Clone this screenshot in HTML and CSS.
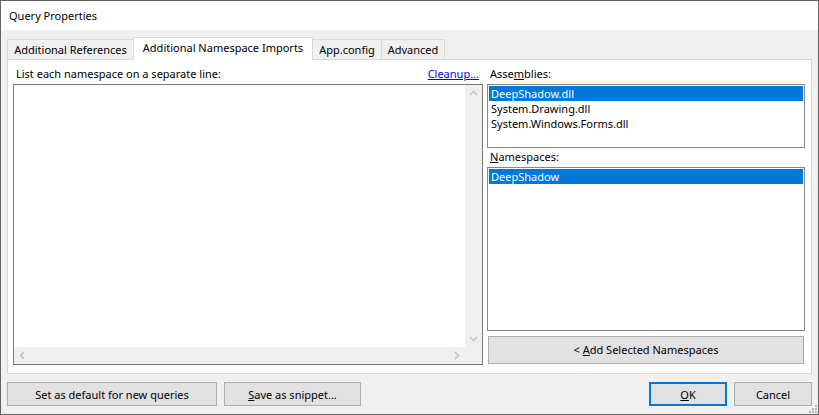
FILE: index.html
```html
<!DOCTYPE html>
<html>
<head>
<meta charset="utf-8">
<title>Query Properties</title>
<link rel="stylesheet" href="styles.css">
</head>
<body>
<div class="window">
  <div class="titlebar">Query Properties</div>
  <div class="client">
    <div class="tabs">
      <div class="tab t1">Additional References</div>
      <div class="tab active t2">Additional Namespace Imports</div>
      <div class="tab t3">App.config</div>
      <div class="tab t4">Advanced</div>
    </div>
    <div class="panel">
      <div class="left-col">
        <div class="label-row"><span>List each namespace on a separate line:</span><a class="link">Cleanup...</a></div>
        <div class="editor">
          <div class="edit-area"></div>
          <div class="vscroll">
            <span class="arrow"><svg width="17" height="17" viewBox="0 0 17 17"><polyline points="5,10 8.5,6.5 12,10" fill="none" stroke="#c2c2c2" stroke-width="1.6"/></svg></span>
            <span class="arrow"><svg width="17" height="17" viewBox="0 0 17 17"><polyline points="5,7 8.5,10.5 12,7" fill="none" stroke="#c2c2c2" stroke-width="1.6"/></svg></span>
          </div>
          <div class="hscroll">
            <span class="arrow"><svg width="17" height="17" viewBox="0 0 17 17"><polyline points="10,5 6.5,8.5 10,12" fill="none" stroke="#c2c2c2" stroke-width="1.6"/></svg></span>
            <span class="arrow"><svg width="17" height="17" viewBox="0 0 17 17"><polyline points="7,5 10.5,8.5 7,12" fill="none" stroke="#c2c2c2" stroke-width="1.6"/></svg></span>
          </div>
          <div class="corner"></div>
        </div>
      </div>
      <div class="right-col">
        <div class="label">Asse<u>m</u>blies:</div>
        <div class="listbox assemblies">
          <div class="item selected">DeepShadow.dll</div>
          <div class="item">System.Drawing.dll</div>
          <div class="item">System.Windows.Forms.dll</div>
        </div>
        <div class="label ns-label"><u>N</u>amespaces:</div>
        <div class="listbox namespaces">
          <div class="item selected">DeepShadow</div>
        </div>
        <button class="btn add-btn">&lt; <u>A</u>dd Selected Namespaces</button>
      </div>
    </div>
    <div class="footer">
      <div class="group">
        <button class="btn w-default">Set as default for new queries</button>
        <button class="btn w-snippet"><u>S</u>ave as snippet...</button>
      </div>
      <div class="group">
        <button class="btn w-ok is-default"><u>O</u>K</button>
        <button class="btn w-cancel">Cancel</button>
      </div>
    </div>
  </div>
  <svg class="grip" width="10" height="10" viewBox="0 0 10 10">
    <rect x="7" y="1" width="2" height="2" fill="#bcbcbc"/>
    <rect x="4" y="4" width="2" height="2" fill="#bcbcbc"/>
    <rect x="7" y="4" width="2" height="2" fill="#bcbcbc"/>
    <rect x="1" y="7" width="2" height="2" fill="#bcbcbc"/>
    <rect x="4" y="7" width="2" height="2" fill="#bcbcbc"/>
    <rect x="7" y="7" width="2" height="2" fill="#bcbcbc"/>
  </svg>
</div>
</body>
</html>
```
FILE: styles.css
```css
* { box-sizing: border-box; }
html, body { margin: 0; padding: 0; }
body {
  width: 819px;
  height: 415px;
  font-family: "Noto Sans", "Open Sans", sans-serif;
  font-size: 11px;
  color: #000;
  background: #f0f0f0;
}
.window {
  position: relative;
  width: 819px;
  height: 415px;
  border: 1px solid #636363;
  background: #f0f0f0;
  display: flex;
  flex-direction: column;
}
.titlebar {
  height: 29px;
  line-height: 29px;
  padding-left: 8px;
  background: #fff;
}
.client {
  flex: 1;
  display: flex;
  flex-direction: column;
  padding: 7px 6px 0 6px;
}
.tabs {
  height: 22px;
  display: flex;
  align-items: flex-end;
}
.tab {
  height: 20px;
  line-height: 19px;
  border: 1px solid #d9d9d9;
  border-bottom: none;
  background: #f0f0f0;
  text-align: center;
  white-space: nowrap;
}
.tab + .tab { margin-left: -1px; }
.tab.active {
  position: relative;
  z-index: 1;
  height: 23px;
  margin-bottom: -1px;
  background: #fff;
}
.t1 { width: 127px; }
.t2 { width: 180px; }
.t3 { width: 70px; }
.t4 { width: 64px; }
.panel {
  height: 315px;
  background: #fff;
  border: 1px solid #d9d9d9;
  padding: 6px 6px 8px 5px;
  display: grid;
  grid-template-columns: 470px 318px;
  column-gap: 4px;
}
.left-col, .right-col {
  display: flex;
  flex-direction: column;
  min-height: 0;
}
.label-row {
  height: 16px;
  line-height: 16px;
  margin-bottom: 2px;
  padding: 0 4px 0 3px;
  display: flex;
  justify-content: space-between;
}
.link {
  color: #0000ff;
  text-decoration: underline;
  cursor: pointer;
}
.editor {
  flex: 1;
  border: 1px solid #7a7a7a;
  display: grid;
  grid-template-columns: 1fr 17px;
  grid-template-rows: 1fr 17px;
}
.edit-area { background: #fff; }
.vscroll, .hscroll, .corner { background: #f0f0f0; }
.vscroll {
  display: flex;
  flex-direction: column;
  justify-content: space-between;
}
.hscroll {
  display: flex;
  justify-content: space-between;
}
.arrow { display: block; width: 17px; height: 17px; }
.arrow svg { display: block; }
.label {
  height: 16px;
  line-height: 16px;
  margin-bottom: 2px;
  padding-left: 3px;
}
.ns-label { margin-top: 1px; }
.listbox {
  border: 1px solid #828790;
  background: #fff;
  padding: 1px;
}
.assemblies { height: 64px; }
.namespaces { flex: 1; }
.item {
  height: 15px;
  line-height: 15px;
  padding-left: 2px;
  white-space: nowrap;
}
.item.selected {
  background: #0078d7;
  color: #fff;
}
.btn {
  font-family: "Noto Sans", "Open Sans", sans-serif;
  font-size: 11px;
  color: #000;
  background: #e1e1e1;
  border: 1px solid #adadad;
  padding: 0;
  margin: 0;
  height: 24px;
  line-height: 21px;
  text-align: center;
  white-space: nowrap;
}
.add-btn {
  height: 28px;
  line-height: 26px;
  margin: 5px 1px 1px 1px;
}
.footer {
  margin-top: 8px;
  display: flex;
  justify-content: space-between;
}
.group {
  display: flex;
  gap: 7px;
}
.w-default { width: 210px; }
.w-snippet { width: 137px; }
.w-ok, .w-cancel { width: 78px; }
.btn.is-default {
  border: 2px solid #0078d7;
  line-height: 19px;
}
.grip {
  position: absolute;
  right: 0;
  bottom: 0;
}
```
